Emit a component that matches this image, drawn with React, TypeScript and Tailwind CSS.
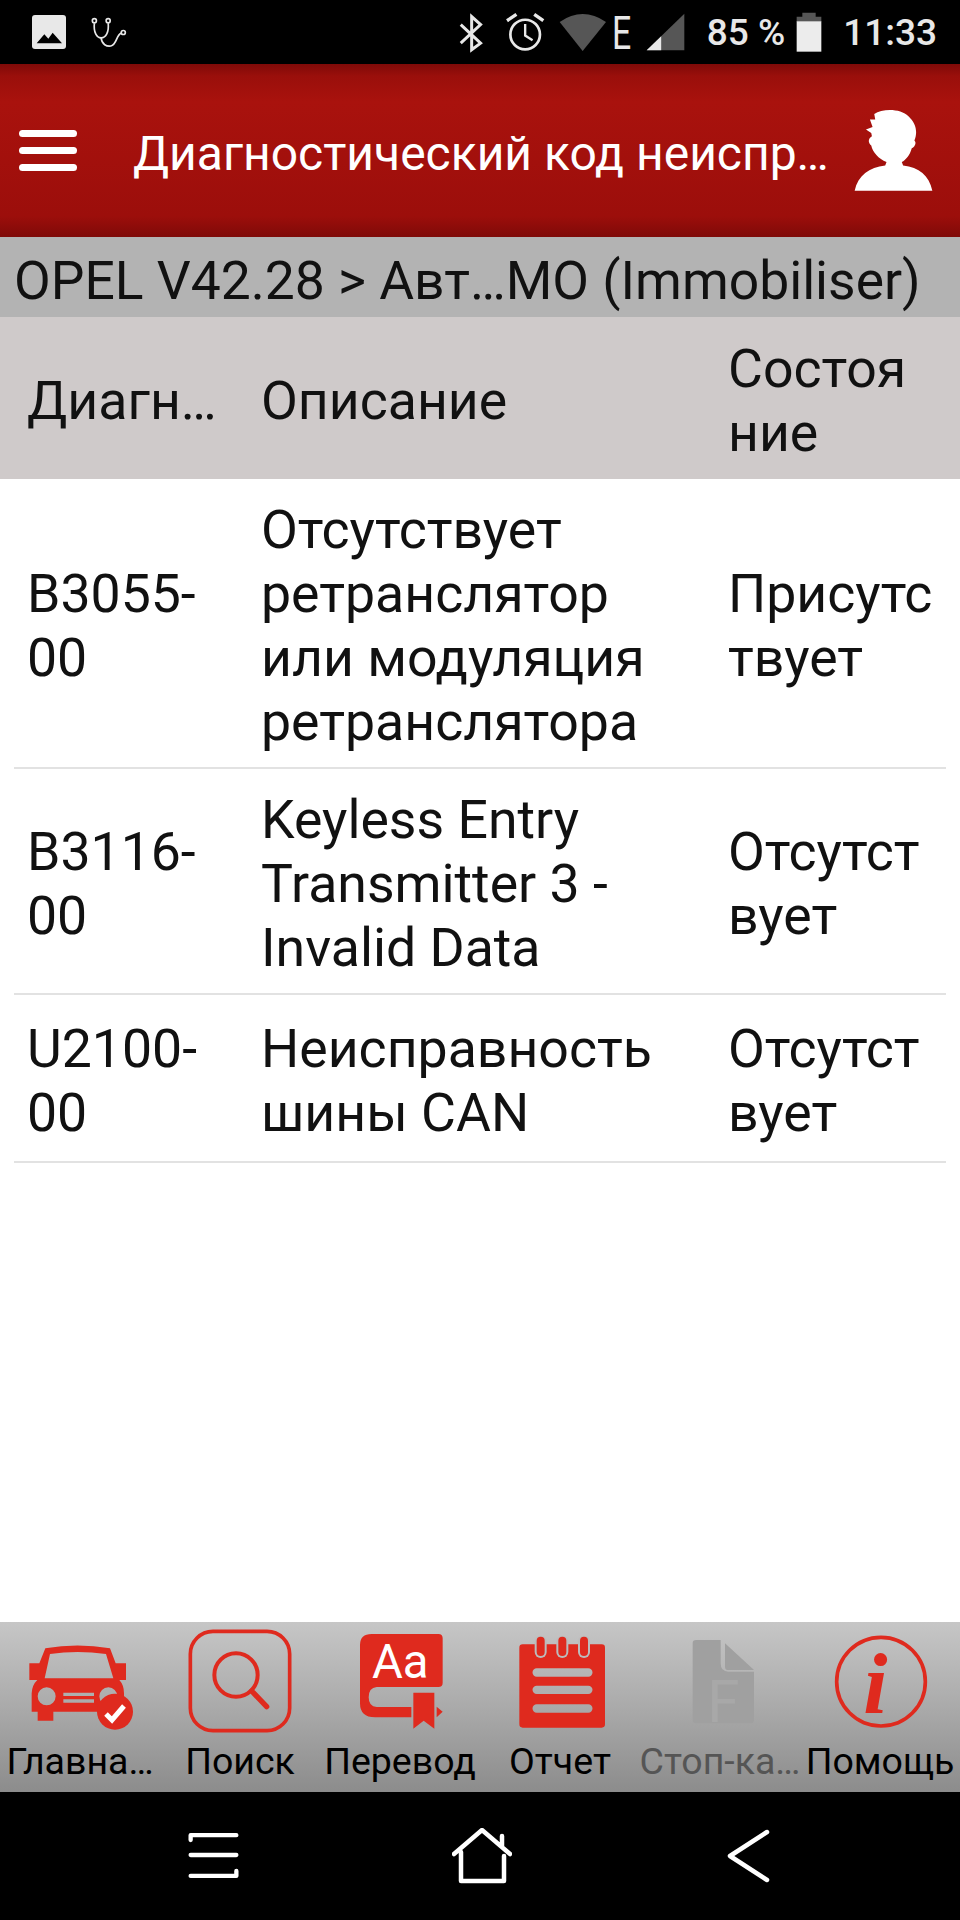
const RED = '#df2a1e';

const rows = [
  {
    code: 'B3055-00',
    desc: 'Отсутствует ретранслятор или модуляция ретранслятора',
    state: 'Присутствует',
  },
  { code: 'B3116-00', desc: 'Keyless Entry Transmitter 3 - Invalid Data', state: 'Отсутствует' },
  { code: 'U2100-00', desc: 'Неисправность шины CAN', state: 'Отсутствует' },
];

function StatusBar() {
  return (
    <div className="flex h-[64px] items-center bg-black pl-[31px] pr-[23px] text-[37px] leading-none text-[#e8e8e8]">
      <svg viewBox="90 42 108 108" className="h-[36px] w-[36px]">
        <rect x="93" y="45" width="102" height="102" rx="9" fill="#e8e8e8" />
        <path d="M107 130 L130 103 L142 116 L155 98 L183 130 Z" fill="#000" />
      </svg>
      <svg viewBox="280 50 110 92" className="ml-[23px] h-[31px] w-[37px]" fill="none" stroke="#e8e8e8" strokeWidth="5">
        <circle cx="293" cy="61" r="6" />
        <circle cx="334" cy="61" r="6" />
        <circle cx="379" cy="96" r="6" />
        <path d="M293 68 C290 95 300 112 313 112 C327 112 337 95 334 68" />
        <path d="M313 112 C315 132 330 138 342 136 C360 133 358 102 373 98" />
      </svg>
      <div className="ml-auto flex items-center">
        <svg viewBox="60 36 78 124" className="h-[41px] w-[26px]" fill="none" stroke="#e8e8e8" strokeWidth="9">
          <path d="M68 74 L128 130 L101 150 L101 50 L128 74 L68 130" />
        </svg>
        <svg viewBox="198 36 122 122" className="ml-[21px] h-[41px] w-[41px]" fill="none" stroke="#e8e8e8">
          <circle cx="258" cy="103" r="44" strokeWidth="8" />
          <path d="M258 72 V106 L280 120" strokeWidth="7" />
          <path d="M204 62 L232 43 M285 43 L312 62" strokeWidth="10" />
        </svg>
        <svg viewBox="365 36 146 116" className="ml-[13px] h-[39px] w-[48px]">
          <path d="M367 62 Q437 14 508 62 L437 150 Z" fill="#565656" />
        </svg>
        <span className="ml-[5px] inline-block w-[24px] origin-left scale-x-[0.72] font-['Roboto',sans-serif] text-[47px] leading-none">
          E
        </span>
        <svg viewBox="626 36 118 114" className="ml-[10px] h-[38px] w-[39px]">
          <path d="M628 148 L742 38 V148 Z" fill="#565656" />
          <path d="M628 148 L672 106 V148 Z" fill="#e8e8e8" />
        </svg>
        <span className="ml-[22px] font-['Roboto',sans-serif] font-medium">85 %</span>
        <svg viewBox="1076 36 78 120" className="ml-[11px] h-[40px] w-[26px]">
          <path d="M1095 38 H1135 V50 H1152 V66 H1078 V50 H1095 Z" fill="#565656" />
          <rect x="1078" y="64" width="74" height="91" fill="#ececec" />
        </svg>
        <span className="ml-[21px] font-['Roboto',sans-serif] font-medium">11:33</span>
      </div>
    </div>
  );
}

function Header() {
  return (
    <div className="flex h-[173px] items-center bg-[linear-gradient(#7f0a08_0%,#9a0f0b_7%,#a9120d_22%,#9c0e0b_88%,#7f0a08_100%)] pl-[19px] pr-[27px]">
      <div className="flex w-[58px] flex-col gap-[10px]">
        <div className="h-[7px] rounded-full bg-white" />
        <div className="h-[7px] rounded-full bg-white" />
        <div className="h-[7px] rounded-full bg-white" />
      </div>
      <div className="ml-[56px] mt-[6px] flex-1 whitespace-nowrap font-['Roboto',sans-serif] text-[48px] leading-none text-white">
        Диагностический код неиспр…
      </div>
      <svg viewBox="1245 330 236 250" className="h-[83px] w-[79px]">
        <path
          fill="#fff"
          d="M1305 345 C1330 328 1385 328 1408 352 C1432 375 1436 400 1426 425 C1434 432 1426 445 1418 448 C1412 470 1400 482 1388 490 L1392 500 C1440 505 1470 530 1480 576 H1246 C1256 530 1290 505 1338 500 L1342 490 C1318 480 1300 460 1296 440 C1284 430 1288 418 1298 412 L1296 402 L1280 392 L1300 384 L1292 362 L1308 362 Z"
        />
      </svg>
    </div>
  );
}

function Footer() {
  const cell = 'flex flex-col items-center';
  const label = 'mt-[2px] whitespace-nowrap text-[37.5px] leading-[42px]';
  return (
    <div className="grid h-[170px] grid-cols-6 bg-[linear-gradient(#c6c6c6,#b0b0b0_40%,#8c8c8c)] font-['Roboto',sans-serif] text-black">
      <div className={cell}>
        <svg viewBox="0 36 480 348" className="h-[116px] w-[160px]">
          <path
            fill={RED}
            fillRule="evenodd"
            d="M136 115 Q232 98 330 115 L347 160 H378 V210 H358 Q372 225 372 250 V305 H345 V332 H300 V305 H160 V332 H113 V305 H95 V250 Q96 225 112 210 H88 V160 H118 Z M150 132 L134 205 H340 L318 132 Q232 120 150 132 Z M140 232 A27 27 0 1 0 140 286 A27 27 0 1 0 140 232 Z M190 248 V258 H282 V248 Z M190 268 V278 H282 V268 Z M325 232 A27 27 0 1 0 325 286 A27 27 0 1 0 325 232 Z"
          />
          <circle cx="345" cy="305" r="54" fill={RED} />
          <path d="M318 312 L336 330 L372 288" fill="none" stroke="#fff" strokeWidth="15" />
        </svg>
        <span className={label}>Главна…</span>
      </div>
      <div className={cell}>
        <svg viewBox="480 36 480 348" className="h-[116px] w-[160px]" fill="none" stroke={RED}>
          <rect x="571" y="64" width="298" height="298" rx="68" strokeWidth="11" />
          <circle cx="708" cy="195" r="65" strokeWidth="12" />
          <path d="M755 243 L800 290" strokeWidth="16" strokeLinecap="round" />
        </svg>
        <span className={label}>Поиск</span>
      </div>
      <div className={cell}>
        <svg viewBox="960 36 480 348" className="h-[116px] w-[160px]">
          <path
            fill={RED}
            d="M1115 72 H1315 Q1328 72 1328 85 V218 Q1328 231 1315 231 H1130 Q1106 233 1106 262 Q1106 290 1130 291 H1234 V322 H1125 Q1080 322 1080 280 V105 Q1080 72 1115 72 Z"
          />
          <path fill={RED} d="M1240 248 H1303 V356 L1271 332 L1240 356 Z M1310 290 L1328 305 L1310 322 Z" />
          <text x="1116" y="205" fill="#fff" fontFamily="Roboto" fontSize="142">
            Aa
          </text>
        </svg>
        <span className={label}>Перевод</span>
      </div>
      <div className={cell}>
        <svg viewBox="0 36 480 348" className="h-[116px] w-[160px]">
          <path
            fill={RED}
            fillRule="evenodd"
            d="M128 103 H365 Q375 103 375 113 V343 Q375 353 365 353 H128 Q118 353 118 343 V113 Q118 103 128 103 Z M170 175 A12 12 0 0 0 170 200 H325 A12 12 0 0 0 325 175 Z M170 227 A12 12 0 0 0 170 252 H325 A12 12 0 0 0 325 227 Z M170 283 A12 12 0 0 0 170 308 H325 A12 12 0 0 0 325 283 Z"
          />
          {[182, 247, 312].map((x) => (
            <g key={x} strokeLinecap="round">
              <path d={`M${x} 95 V126`} stroke="#bcbcbc" strokeWidth="36" />
              <path d={`M${x} 92 V126`} stroke={RED} strokeWidth="24" />
            </g>
          ))}
        </svg>
        <span className={label}>Отчет</span>
      </div>
      <div className={cell}>
        <svg viewBox="480 36 480 348" className="h-[116px] w-[160px]">
          <path
            fill="#a0a0a0"
            d="M648 90 H722 V160 Q722 185 745 185 H822 V330 Q822 340 812 340 H648 Q638 340 638 330 V100 Q638 90 648 90 Z M735 100 L822 180 H745 Q735 180 735 170 Z"
          />
          <text x="682" y="336" fill="#a8a8a8" fontFamily="Roboto" fontSize="175">
            F
          </text>
        </svg>
        <span className={`${label} text-[#555555]`}>Стоп-ка…</span>
      </div>
      <div className={cell}>
        <svg viewBox="960 36 480 348" className="h-[116px] w-[160px]">
          <circle cx="1203" cy="215" r="133" fill="none" stroke={RED} strokeWidth="11" />
          <text x="1150" y="308" fill={RED} fontFamily="Liberation Serif" fontStyle="italic" fontWeight="700" fontSize="262">
            i
          </text>
        </svg>
        <span className={label}>Помощь</span>
      </div>
    </div>
  );
}

function NavBar() {
  return (
    <div className="flex h-[128px] items-center gap-[212px] bg-black pl-[187px]">
      <svg viewBox="560 665 160 150" className="h-[50px] w-[53px]" fill="none" stroke="#fff" strokeWidth="13" strokeLinecap="round" strokeLinejoin="round">
        <path d="M571 692 V677 H709 M571 737 H709 M709 785 V800 H571" />
      </svg>
      <svg viewBox="0 0 60 56" className="h-[56px] w-[60px]" fill="none" stroke="#fff" strokeWidth="4.5" strokeLinecap="round" strokeLinejoin="round">
        <path d="M2 26 L30 2 L58 26 M50 8 V18 M9 24 V53 H52 V28" />
      </svg>
      <svg viewBox="0 0 44 54" className="ml-[2px] h-[54px] w-[44px]" fill="none" stroke="#fff" strokeWidth="4.5" strokeLinecap="round" strokeLinejoin="round">
        <path d="M41 3 L4 27 L41 51" />
      </svg>
    </div>
  );
}

export default function App() {
  return (
    <div className="flex h-[1920px] w-[960px] flex-col overflow-hidden bg-white font-['Roboto',sans-serif] text-[#111111]">
      <StatusBar />
      <Header />
      <div className="flex h-[80px] items-center whitespace-nowrap bg-[#b3b3b3] pl-[14px] pt-[7px] text-[53.4px] leading-none">
        OPEL V42.28 &gt; Авт…МО (Immobiliser)
      </div>

      {/* Column titles */}
      <div className="grid h-[162px] grid-cols-[234px_467px_1fr] items-center bg-[#cfcaca] pl-[27px] pt-[5px] text-[53.6px] leading-[64px]">
        <div>Диагн…</div>
        <div>Описание</div>
        <div className="break-all pr-[30px]">Состояние</div>
      </div>

      <div className="flex-1 px-[14px]">
        {rows.map((r) => (
          <div
            key={r.code}
            className="grid min-h-[168px] grid-cols-[234px_467px_1fr] items-center border-b-[2px] border-[#e2e2e2] pb-[13px] pl-[13px] pt-[19px] text-[53.6px] leading-[64px]"
          >
            <div className="pr-[20px]">{r.code}</div>
            <div className="pr-[25px]">{r.desc}</div>
            <div className="break-all">{r.state}</div>
          </div>
        ))}
      </div>

      <Footer />
      <NavBar />
    </div>
  );
}
